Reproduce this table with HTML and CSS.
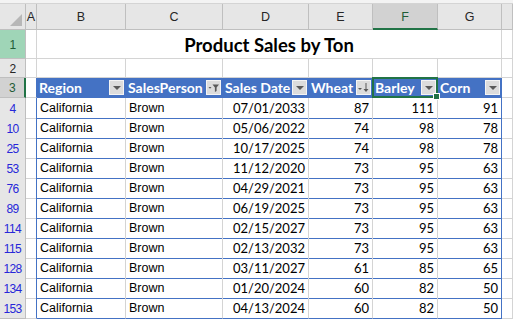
FILE: index.html
```html
<html>
    <head>
        <title>Product Sales by Ton</title>
        <link rel="stylesheet" href="styles.css">
    </head>
    <body>
        <div class="sheet">
            <div class="strip"></div>

            <div class="row colhead">
                <div class="corner"><span class="cornerTri"></span></div>
                <div class="ch">A</div>
                <div class="ch">B</div>
                <div class="ch">C</div>
                <div class="ch">D</div>
                <div class="ch">E</div>
                <div class="ch chSel">F</div>
                <div class="ch">G</div>
                <div class="ch"></div>
            </div>

            <div class="row r1">
                <div class="rh rhGreen">1</div>
                <div class="c"></div>
                <div class="c title">Product Sales by Ton</div>
                <div class="c"></div>
            </div>

            <div class="row r2">
                <div class="rh">2</div>
                <div class="c"></div><div class="c"></div><div class="c"></div><div class="c"></div>
                <div class="c"></div><div class="c"></div><div class="c"></div><div class="c"></div>
            </div>

            <div class="row r3">
                <div class="rh rhSel">3</div>
                <div class="c tblLeft"></div>
                <div class="hd">Region<span class="fbtn"><span class="tri"></span></span></div>
                <div class="hd">SalesPerson<span class="fbtn">
                    <svg width="13" height="13" viewBox="0 0 13 13">
                        <polygon points="1.5,6 4.5,6 3,7.8" fill="#595959"/>
                        <polygon points="5.5,3.5 12,3.5 9.6,6.6 9.6,10 7.9,11 7.9,6.6" fill="#595959"/>
                    </svg></span></div>
                <div class="hd">Sales Date<span class="fbtn"><span class="tri"></span></span></div>
                <div class="hd">Wheat<span class="fbtn">
                    <svg width="13" height="13" viewBox="0 0 13 13">
                        <polygon points="1,7 5,7 3,9" fill="#595959"/>
                        <rect x="8.5" y="2" width="1" height="8" fill="#595959"/>
                        <polygon points="6.5,8 11.5,8 9,11" fill="#595959"/>
                    </svg></span></div>
                <div class="hd hdSel">Barley<span class="fbtn"><span class="tri"></span></span></div>
                <div class="hd hdLast">Corn<span class="fbtn"><span class="tri"></span></span></div>
                <div class="c"></div>
            </div>

            <div class="row"><div class="rh rhBlue">4</div><div class="c tblLeft"></div><div class="td">California</div><div class="td">Brown</div><div class="td num">07/01/2033</div><div class="td num">87</div><div class="td num">111</div><div class="td num last">91</div><div class="c"></div></div>
            <div class="row"><div class="rh rhBlue">10</div><div class="c tblLeft"></div><div class="td">California</div><div class="td">Brown</div><div class="td num">05/06/2022</div><div class="td num">74</div><div class="td num">98</div><div class="td num last">78</div><div class="c"></div></div>
            <div class="row"><div class="rh rhBlue">25</div><div class="c tblLeft"></div><div class="td">California</div><div class="td">Brown</div><div class="td num">10/17/2025</div><div class="td num">74</div><div class="td num">98</div><div class="td num last">78</div><div class="c"></div></div>
            <div class="row"><div class="rh rhBlue">53</div><div class="c tblLeft"></div><div class="td">California</div><div class="td">Brown</div><div class="td num">11/12/2020</div><div class="td num">73</div><div class="td num">95</div><div class="td num last">63</div><div class="c"></div></div>
            <div class="row"><div class="rh rhBlue">76</div><div class="c tblLeft"></div><div class="td">California</div><div class="td">Brown</div><div class="td num">04/29/2021</div><div class="td num">73</div><div class="td num">95</div><div class="td num last">63</div><div class="c"></div></div>
            <div class="row"><div class="rh rhBlue">89</div><div class="c tblLeft"></div><div class="td">California</div><div class="td">Brown</div><div class="td num">06/19/2025</div><div class="td num">73</div><div class="td num">95</div><div class="td num last">63</div><div class="c"></div></div>
            <div class="row"><div class="rh rhBlue">114</div><div class="c tblLeft"></div><div class="td">California</div><div class="td">Brown</div><div class="td num">02/15/2027</div><div class="td num">73</div><div class="td num">95</div><div class="td num last">63</div><div class="c"></div></div>
            <div class="row"><div class="rh rhBlue">115</div><div class="c tblLeft"></div><div class="td">California</div><div class="td">Brown</div><div class="td num">02/13/2032</div><div class="td num">73</div><div class="td num">95</div><div class="td num last">63</div><div class="c"></div></div>
            <div class="row"><div class="rh rhBlue">128</div><div class="c tblLeft"></div><div class="td">California</div><div class="td">Brown</div><div class="td num">03/11/2027</div><div class="td num">61</div><div class="td num">85</div><div class="td num last">65</div><div class="c"></div></div>
            <div class="row"><div class="rh rhBlue">134</div><div class="c tblLeft"></div><div class="td">California</div><div class="td">Brown</div><div class="td num">01/20/2024</div><div class="td num">60</div><div class="td num">82</div><div class="td num last">50</div><div class="c"></div></div>
            <div class="row"><div class="rh rhBlue">153</div><div class="c tblLeft"></div><div class="td">California</div><div class="td">Brown</div><div class="td num">04/13/2024</div><div class="td num">60</div><div class="td num">82</div><div class="td num last">50</div><div class="c"></div></div>
        </div>
    </body>
</html>
```

FILE: styles.css
```css
body
{
    margin: 0;
    padding: 0;
    background-color: #ffffff;
    font-family: "Liberation Sans", Arial, sans-serif;
}
.sheet
{
    width: 513px;
    height: 319px;
    overflow: hidden;
}
.strip
{
    height: 3px;
    background-color: #f3f3f3;
    border-bottom: 1px solid #d4d4d4;
}
.row
{
    display: grid;
    grid-template-columns: 26px 11px 89px 97px 86px 64px 65px 64px 1fr;
    height: 20px;
}
.row > div
{
    box-sizing: border-box;
    border-right: 1px solid #d4d4d4;
    border-bottom: 1px solid #d4d4d4;
}
.colhead
{
    height: 26px;
}
.r1
{
    height: 29px;
}
.r2
{
    height: 19px;
}

/* column letters */
.ch, .corner
{
    background-color: #e6e6e6;
    border-color: #bfbfbf !important;
    display: flex;
    align-items: center;
    justify-content: center;
    padding-top: 1px;
    font-size: 12.5px;
    color: #262626;
}
.corner
{
    justify-content: flex-end;
    align-items: flex-end;
}
.cornerTri
{
    width: 0;
    height: 0;
    margin: 0 3px 3px 0;
    border-left: 12px solid transparent;
    border-bottom: 12px solid #b7b7b7;
}
.ch.chSel
{
    background-color: #d2d2d2;
    border-bottom: 2px solid #217346 !important;
    color: #1e5c36;
}

/* row numbers */
.rh
{
    background-color: #e6e6e6;
    border-color: #bfbfbf !important;
    display: flex;
    align-items: center;
    justify-content: center;
    padding-top: 1px;
    font-size: 12px;
    letter-spacing: -0.6px;
    color: #262626;
}
.rh.rhGreen
{
    background-color: #9fd5b7;
    color: #1e5c36;
}
.rh.rhSel
{
    background-color: #d2d2d2;
    border-right: 2px solid #217346 !important;
    color: #1e5c36;
}
.rh.rhBlue
{
    color: #2626d9;
}

.title
{
    grid-column: 3 / 9;
    display: flex;
    align-items: center;
    justify-content: center;
    padding-top: 2px;
    font-family: Lato, "Liberation Sans", sans-serif;
    font-weight: bold;
    font-size: 18.5px;
    color: #000000;
}

/* table */
.row > .tblLeft
{
    border-right-color: #4472c4;
}
.hd
{
    background-color: #4472c4;
    border-color: #4472c4 !important;
    color: #ffffff;
    font-family: Lato, "Liberation Sans", sans-serif;
    font-weight: bold;
    font-size: 14px;
    display: flex;
    align-items: center;
    justify-content: space-between;
    padding-left: 2px;
    white-space: nowrap;
}
.hd.hdSel
{
    position: relative;
}
.hd.hdSel::after
{
    content: "";
    position: absolute;
    left: -1px;
    top: -1px;
    right: -1px;
    bottom: -1px;
    border: 2px solid #217346;
}
.hd.hdSel::before
{
    content: "";
    position: absolute;
    right: -3px;
    bottom: -3px;
    width: 5px;
    height: 5px;
    background-color: #217346;
    border: 1px solid #ffffff;
    z-index: 1;
}
.fbtn
{
    width: 15px;
    height: 15px;
    box-sizing: border-box;
    margin-right: 1px;
    background-color: #dcdcdc;
    border: 1px solid #f4f4f4;
    display: flex;
    align-items: center;
    justify-content: center;
    flex-shrink: 0;
}
.tri
{
    width: 0;
    height: 0;
    margin-top: 1px;
    border-left: 4px solid transparent;
    border-right: 4px solid transparent;
    border-top: 4px solid #595959;
}
.td
{
    border-bottom-color: #4472c4 !important;
    font-size: 12.5px;
    color: #000000;
    line-height: 20px;
    padding-left: 3px;
    white-space: nowrap;
}
.td.num
{
    text-align: right;
    padding-left: 0;
    padding-right: 3px;
    font-family: Lato, "Liberation Sans", sans-serif;
    font-size: 13px;
}
.row > .last
{
    border-right-color: #4472c4;
}
```
